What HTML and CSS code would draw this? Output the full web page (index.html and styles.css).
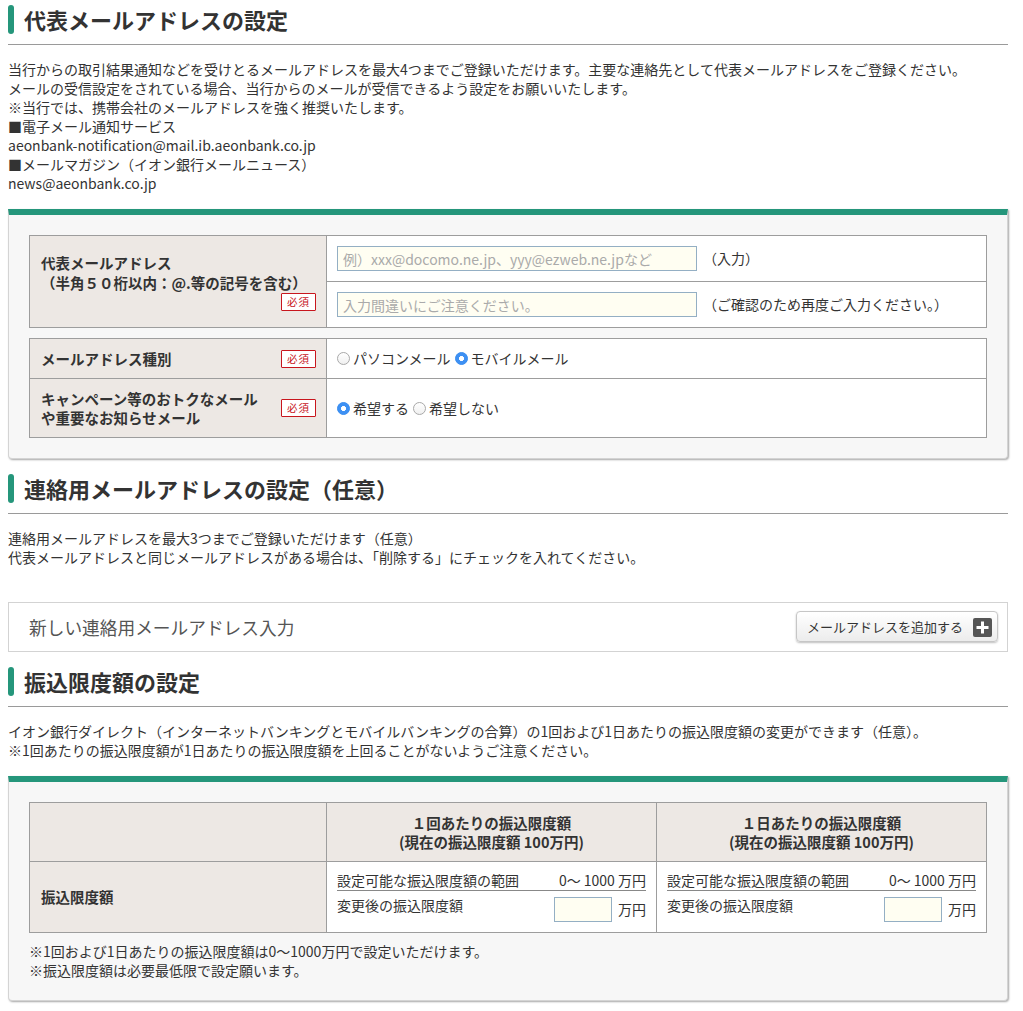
FILE: index.html
```html
<!DOCTYPE html>
<html lang="ja">
<head>
<meta charset="utf-8">
<title>メールアドレス・振込限度額の設定</title>
<link rel="stylesheet" href="styles.css">
</head>
<body>
<div class="page">

  <section class="sec">
    <div class="sec-title"><h2>代表メールアドレスの設定</h2></div>
    <p class="lead">当行からの取引結果通知などを受けとるメールアドレスを最大4つまでご登録いただけます。主要な連絡先として代表メールアドレスをご登録ください。<br>メールの受信設定をされている場合、当行からのメールが受信できるよう設定をお願いいたします。<br>※当行では、携帯会社のメールアドレスを強く推奨いたします。<br>■電子メール通知サービス<br>aeonbank-notification@mail.ib.aeonbank.co.jp<br>■メールマガジン（イオン銀行メールニュース）<br>news@aeonbank.co.jp</p>

    <div class="panel">
      <table class="form-table">
        <colgroup><col class="c-label"><col></colgroup>
        <tr>
          <th rowspan="2" class="lbl">
            <div class="lbl-text tall">代表メールアドレス<br>（半角５０桁以内：@.等の記号を含む）</div>
            <div class="req-row"><span class="req">必須</span></div>
          </th>
          <td class="val-input">
            <div class="field"><input class="txt" type="text" placeholder="例）xxx@docomo.ne.jp、yyy@ezweb.ne.jpなど"><span class="hint">（入力）</span></div>
          </td>
        </tr>
        <tr>
          <td class="val-input">
            <div class="field"><input class="txt" type="text" placeholder="入力間違いにご注意ください。"><span class="hint">（ご確認のため再度ご入力ください。）</span></div>
          </td>
        </tr>
      </table>

      <table class="form-table gap">
        <colgroup><col class="c-label"><col></colgroup>
        <tr>
          <th class="lbl">
            <div class="lbl-row"><span class="lbl-text">メールアドレス種別</span><span class="req">必須</span></div>
          </th>
          <td class="val-radio">
            <div class="radios">
              <label class="radio"><input type="radio" name="mtype">パソコンメール</label>
              <label class="radio"><input type="radio" name="mtype" checked>モバイルメール</label>
            </div>
          </td>
        </tr>
        <tr>
          <th class="lbl">
            <div class="lbl-row"><span class="lbl-text">キャンペーン等のおトクなメール<br>や重要なお知らせメール</span><span class="req">必須</span></div>
          </th>
          <td class="val-radio">
            <div class="radios">
              <label class="radio"><input type="radio" name="camp" checked>希望する</label>
              <label class="radio"><input type="radio" name="camp">希望しない</label>
            </div>
          </td>
        </tr>
      </table>
    </div>
  </section>

  <section class="sec">
    <div class="sec-title"><h2>連絡用メールアドレスの設定（任意）</h2></div>
    <p class="lead lead-wide">連絡用メールアドレスを最大3つまでご登録いただけます（任意）<br>代表メールアドレスと同じメールアドレスがある場合は、「削除する」にチェックを入れてください。</p>
    <div class="add-box">
      <span class="add-title">新しい連絡用メールアドレス入力</span>
      <button class="add-btn" type="button">メールアドレスを追加する
        <svg class="plus" width="19" height="19" viewBox="0 0 19 19" aria-hidden="true"><rect x="0" y="0" width="19" height="19" rx="2" fill="#555"/><path d="M9.5 3.5v12M3.5 9.5h12" stroke="#fff" stroke-width="3" fill="none"/></svg>
      </button>
    </div>
  </section>

  <section class="sec">
    <div class="sec-title"><h2>振込限度額の設定</h2></div>
    <p class="lead">イオン銀行ダイレクト（インターネットバンキングとモバイルバンキングの合算）の1回および1日あたりの振込限度額の変更ができます（任意）。<br>※1回あたりの振込限度額が1日あたりの振込限度額を上回ることがないようご注意ください。</p>

    <div class="panel">
      <table class="form-table limit-table">
        <colgroup><col class="c-label"><col class="c-half"><col></colgroup>
        <tr>
          <th class="head-cell"></th>
          <th class="head-cell">１回あたりの振込限度額<br>(現在の振込限度額 100万円)</th>
          <th class="head-cell">１日あたりの振込限度額<br>(現在の振込限度額 100万円)</th>
        </tr>
        <tr>
          <th class="lbl"><span class="lbl-text">振込限度額</span></th>
          <td class="lim">
            <div class="lim-range"><span>設定可能な振込限度額の範囲</span><span>0～ 1000 万円</span></div>
            <div class="lim-edit"><span class="lim-label">変更後の振込限度額</span><span class="lim-input"><input class="amt" type="text">万円</span></div>
          </td>
          <td class="lim">
            <div class="lim-range"><span>設定可能な振込限度額の範囲</span><span>0～ 1000 万円</span></div>
            <div class="lim-edit"><span class="lim-label">変更後の振込限度額</span><span class="lim-input"><input class="amt" type="text">万円</span></div>
          </td>
        </tr>
      </table>
      <p class="notes">※1回および1日あたりの振込限度額は0～1000万円で設定いただけます。<br>※振込限度額は必要最低限で設定願います。</p>
    </div>
  </section>

</div>
</body>
</html>
```

FILE: styles.css
```css
* {
  box-sizing: border-box;
}

html,
body {
  margin: 0;
  padding: 0;
  background: #fff;
}

body {
  font-family: "Noto Sans CJK JP", "Noto Sans", sans-serif;
  font-size: 14px;
  line-height: 19px;
  color: #333;
}

.page {
  width: 1000px;
  margin: 0 8px;
  padding-bottom: 8px;
}

.sec + .sec {
  margin-top: 10px;
}

/* section heading */
.sec-title {
  padding: 5px 0 10px;
  border-bottom: 1px solid #9a9a9a;
}

.sec-title h2 {
  margin: 0;
  display: flex;
  align-items: center;
  gap: 10px;
  font-size: 22px;
  line-height: 29px;
  font-weight: bold;
  color: #333;
}

.sec-title h2::before {
  content: "";
  flex: none;
  width: 6px;
  height: 29px;
  border-radius: 3px;
  background: #25967b;
}

.lead {
  margin: 15px 0 16px;
}

.lead-wide {
  margin-bottom: 35px;
}

/* panel */
.panel {
  background: #f7f7f7;
  border: 1px solid #d4d4d4;
  border-top: 6px solid #25967b;
  border-radius: 0 0 4px 4px;
  box-shadow: 1px 1px 2px rgba(0, 0, 0, 0.35);
  padding: 20px 20px 20px;
}

/* tables */
.form-table {
  width: 100%;
  border-collapse: collapse;
  background: #fff;
}

.form-table.gap {
  margin-top: 10px;
}

.form-table th,
.form-table td {
  border: 1px solid #9d9d9d;
  padding: 0;
  vertical-align: middle;
}

.c-label {
  width: 297px;
}

.c-half {
  width: 330px;
}

.form-table .lbl {
  background: #ede8e4;
  text-align: left;
  padding: 10px 10px 10px 11px;
}

.lbl-text {
  font-size: 14.5px;
  font-weight: bold;
  line-height: 19px;
  color: #333;
}

.lbl-text.tall {
  line-height: 20px;
}

.req-row {
  display: flex;
  justify-content: flex-end;
}

.lbl-row {
  display: flex;
  align-items: center;
  justify-content: space-between;
}

.req {
  display: inline-block;
  width: 35px;
  height: 18px;
  border: 1px solid #c8161d;
  border-radius: 1px;
  background: #fff;
  color: #c8161d;
  font-size: 10.5px;
  line-height: 16px;
  font-weight: normal;
  text-align: center;
  letter-spacing: 1px;
}

.form-table .val-input {
  padding: 10px;
}

.field {
  display: flex;
  align-items: center;
  gap: 6px;
}

.txt {
  width: 360px;
  height: 25px;
  margin: 0;
  padding: 0 5px;
  border: 1px solid #94afc4;
  background: #fffef2;
  font-family: inherit;
  font-size: 14px;
  color: #333;
  outline: none;
}

.txt::placeholder {
  color: #aaa;
}

.form-table .val-radio {
  padding: 10px;
}

.radios {
  display: flex;
  align-items: center;
  gap: 4px;
}

.radio {
  display: flex;
  align-items: center;
  gap: 3px;
  line-height: 19px;
}

.radio input {
  appearance: none;
  -webkit-appearance: none;
  width: 13px;
  height: 13px;
  margin: 0;
  border: 1px solid #a9a9a9;
  border-radius: 50%;
  background: linear-gradient(#fff, #f0f0f0);
}

.radio input:checked {
  border-color: #3a8ef0;
  background: radial-gradient(circle, #fff 0 2.2px, #3d90f3 2.8px);
}

/* add box */
.add-box {
  display: flex;
  align-items: center;
  justify-content: space-between;
  height: 50px;
  padding: 0 9px 0 20px;
  border: 1px solid #d3d3d3;
  background: #fff;
}

.add-title {
  font-size: 17.7px;
  color: #555;
}

.add-btn {
  display: flex;
  align-items: center;
  gap: 10px;
  height: 31px;
  margin-top: -2px;
  padding: 0 5px 0 10px;
  border: 1px solid #c6c6c6;
  border-radius: 4px;
  background: linear-gradient(#ffffff, #ececec);
  box-shadow: 0 1px 2px rgba(0, 0, 0, 0.25);
  font-family: inherit;
  font-size: 13px;
  color: #333;
}

.plus {
  display: block;
  margin-top: 3px;
}

/* limit table */
.form-table .head-cell {
  background: #ede8e4;
  height: 59px;
  padding: 0 10px;
  font-size: 14.5px;
  font-weight: bold;
  line-height: 19px;
  text-align: center;
  color: #333;
}

.form-table .lim {
  padding: 9px 10px 10px;
}

.lim-range {
  display: flex;
  justify-content: space-between;
  border-bottom: 1px solid #888;
}

.lim-edit {
  display: flex;
  justify-content: space-between;
  align-items: flex-start;
}

.lim-label {
  padding-top: 5px;
}

.lim-input {
  display: flex;
  align-items: center;
  gap: 6px;
  margin-top: 6px;
}

.amt {
  width: 58px;
  height: 25px;
  margin: 0;
  border: 1px solid #94afc4;
  background: #fffef2;
  outline: none;
}

.notes {
  margin: 9px 0 0;
}
```
